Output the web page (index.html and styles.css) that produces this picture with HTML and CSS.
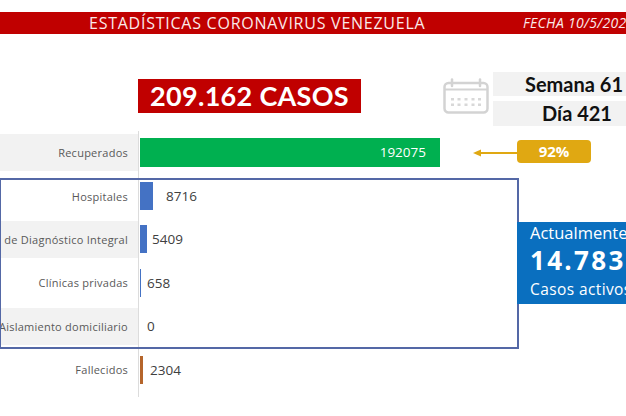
FILE: index.html
```html
<!DOCTYPE html>
<html lang="es">
<head>
<meta charset="utf-8">
<title>Estadísticas Coronavirus Venezuela</title>
<link rel="stylesheet" href="styles.css">
</head>
<body>
<div class="page">
  <header class="header">
    <div class="title">ESTADÍSTICAS CORONAVIRUS VENEZUELA</div>
    <div class="fecha">FECHA 10/5/2021</div>
  </header>

  <section class="top">
    <div class="casos">209.162 CASOS</div>
    <svg class="calendar" width="46" height="36" viewBox="0 0 46 36" aria-hidden="true">
      <rect x="1.5" y="5" width="43" height="29.5" rx="4" fill="none" stroke="#d3d3d3" stroke-width="2.5"/>
      <line x1="1.5" y1="11.5" x2="44.5" y2="11.5" stroke="#d3d3d3" stroke-width="2"/>
      <line x1="9" y1="1.5" x2="9" y2="8" stroke="#d3d3d3" stroke-width="2.5" stroke-linecap="round"/>
      <line x1="37" y1="1.5" x2="37" y2="8" stroke="#d3d3d3" stroke-width="2.5" stroke-linecap="round"/>
      <g fill="#d8d8d8">
        <rect x="8" y="20" width="3" height="2.5"/><rect x="14.5" y="20" width="3" height="2.5"/><rect x="21.5" y="20" width="3" height="2.5"/><rect x="28.5" y="20" width="3" height="2.5"/><rect x="35" y="20" width="3" height="2.5"/>
        <rect x="8" y="25.5" width="3" height="2.5"/><rect x="14.5" y="25.5" width="3" height="2.5"/><rect x="21.5" y="25.5" width="3" height="2.5"/><rect x="28.5" y="25.5" width="3" height="2.5"/><rect x="35" y="25.5" width="3" height="2.5"/>
      </g>
    </svg>
    <div class="week">
      <div class="wk wk-a">Semana 61</div>
      <div class="wk wk-b">Día 421</div>
    </div>
  </section>

  <section class="chart">
    <div class="row">
      <div class="label shade"><span>Recuperados</span></div>
      <div class="axis"></div>
      <div class="plot">
        <div class="bar bar-green">192075</div>
        <svg class="arrow" width="44" height="10" viewBox="0 0 44 10" aria-hidden="true">
          <line x1="6" y1="5" x2="44" y2="5" stroke="#e0a812" stroke-width="2"/>
          <polygon points="0,5 8,1.5 8,8.5" fill="#e0a812"/>
        </svg>
        <div class="pct">92%</div>
      </div>
    </div>
    <div class="row">
      <div class="label"><span>Hospitales</span></div>
      <div class="axis"></div>
      <div class="plot">
        <div class="bar bar-blue" style="width:13px"></div>
        <span class="val val-hosp">8716</span>
      </div>
    </div>
    <div class="row">
      <div class="label shade"><span>Centro de Diagnóstico Integral</span></div>
      <div class="axis"></div>
      <div class="plot">
        <div class="bar bar-blue" style="width:7px"></div>
        <span class="val val-near">5409</span>
      </div>
    </div>
    <div class="row">
      <div class="label"><span>Clínicas privadas</span></div>
      <div class="axis"></div>
      <div class="plot">
        <div class="bar bar-blue" style="width:1px"></div>
        <span class="val val-clin">658</span>
      </div>
    </div>
    <div class="row">
      <div class="label shade"><span>Aislamiento domiciliario</span></div>
      <div class="axis"></div>
      <div class="plot">
        <span class="val val-zero">0</span>
      </div>
    </div>
    <div class="row">
      <div class="label"><span>Fallecidos</span></div>
      <div class="axis"></div>
      <div class="plot">
        <div class="bar bar-brown" style="width:3px"></div>
        <span class="val val-fall">2304</span>
      </div>
    </div>
    <div class="row row-end">
      <div class="label"></div>
      <div class="axis"></div>
      <div class="plot"></div>
    </div>

    <div class="frame"></div>
    <div class="active">
      <div class="act-1">Actualmente</div>
      <div class="act-2">14.783</div>
      <div class="act-3">Casos activos</div>
    </div>
  </section>
</div>
</body>
</html>
```

FILE: styles.css
```css
html, body {
  margin: 0;
  padding: 0;
  background: #ffffff;
  overflow: hidden;
}

.page {
  width: 626px;
  height: 416px;
  overflow: hidden;
  position: relative;
  font-family: "Open Sans", "Liberation Sans", sans-serif;
}

.header {
  margin-top: 12px;
  height: 22px;
  background: #c00000;
  display: grid;
  grid-template-columns: 523px 1fr;
  align-items: center;
  overflow: hidden;
  white-space: nowrap;
}

.title {
  padding-left: 89px;
  color: #fbeaea;
  font-size: 16px;
  letter-spacing: 0.75px;
  line-height: 22px;
}

.fecha {
  color: #fbeaea;
  font-style: italic;
  font-size: 14px;
  letter-spacing: 0.3px;
  line-height: 22px;
}

.top {
  display: flex;
  align-items: flex-start;
  padding: 38px 0 5px 138px;
}

.casos {
  margin-top: 7px;
  width: 223px;
  height: 34px;
  flex-shrink: 0;
  background: #c00000;
  color: #ffffff;
  font-family: Lato, "Open Sans", sans-serif;
  font-weight: 700;
  font-size: 27px;
  line-height: 34px;
  text-align: center;
  letter-spacing: 0.3px;
  white-space: nowrap;
}

.calendar {
  margin-top: 6px;
  margin-left: 82px;
  flex-shrink: 0;
}

.week {
  margin-left: 4px;
  width: 162px;
  flex-shrink: 0;
  display: flex;
  flex-direction: column;
  gap: 5px;
}

.wk {
  background: #f2f2f2;
  color: #111111;
  font-family: Lato, "Open Sans", sans-serif;
  font-weight: 700;
  font-size: 20px;
  text-align: center;
  white-space: nowrap;
}

.wk-a {
  height: 24px;
  line-height: 24px;
}

.wk-b {
  height: 25px;
  line-height: 25px;
  padding-left: 6px;
}

.chart {
  position: relative;
}

.row {
  display: grid;
  grid-template-columns: 138px 1px 1fr;
  height: 43.4px;
}

.row-end {
  height: 6px;
}

.label {
  margin: 3px 0;
  display: flex;
  justify-content: flex-end;
  align-items: center;
  padding-right: 10px;
  overflow: hidden;
  white-space: nowrap;
  color: #595959;
  font-size: 11px;
  letter-spacing: 0.25px;
}

.row-end .label {
  margin: 0;
}

.label span {
  flex-shrink: 0;
}

.label.shade {
  background: #f2f2f2;
}

.axis {
  background: #dcdcdc;
}

.plot {
  display: flex;
  align-items: center;
  padding-left: 1px;
  white-space: nowrap;
}

.bar {
  height: 28px;
  flex-shrink: 0;
}

.bar-green {
  width: 300px;
  height: 29px;
  background: #00b050;
  color: #ffffff;
  font-size: 13.5px;
  line-height: 29px;
  text-align: right;
  padding-right: 14px;
  box-sizing: border-box;
}

.bar-blue {
  background: #4472c4;
}

.bar-brown {
  background: #b5652b;
}

.arrow {
  margin-left: 33px;
  flex-shrink: 0;
}

.pct {
  width: 74px;
  height: 23px;
  margin-top: -2px;
  border-radius: 4px;
  background: #e0a812;
  color: #ffffff;
  font-weight: 700;
  font-size: 15px;
  line-height: 23px;
  text-align: center;
  flex-shrink: 0;
}

.val {
  color: #404040;
  font-size: 13.5px;
}

.val-hosp { margin-left: 13px; }
.val-near { margin-left: 5px; }
.val-clin { margin-left: 6px; }
.val-zero { margin-left: 7px; }
.val-fall { margin-left: 7px; }

.frame {
  position: absolute;
  left: -1px;
  top: 47px;
  width: 520px;
  height: 171px;
  box-sizing: border-box;
  border: 2px solid #5468a6;
  pointer-events: none;
}

.active {
  position: absolute;
  left: 517px;
  top: 91px;
  width: 130px;
  height: 82px;
  box-sizing: border-box;
  padding: 2px 0 0 13px;
  background: #0a6fbf;
  color: #ffffff;
  white-space: nowrap;
}

.act-1 {
  font-size: 16.5px;
  line-height: 17px;
}

.act-2 {
  font-weight: 700;
  font-size: 26px;
  letter-spacing: 2.3px;
  line-height: 38px;
}

.act-3 {
  font-size: 15.5px;
  line-height: 20px;
  letter-spacing: 0.4px;
}
```
